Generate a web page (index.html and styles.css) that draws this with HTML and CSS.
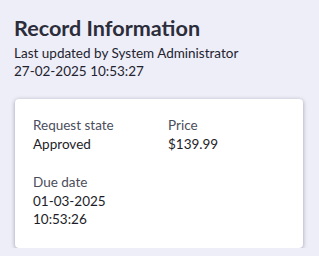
FILE: index.html
```html
<!DOCTYPE html>
<html>
<head>
  <link rel="stylesheet" href="styles.css">
</head>
<body>
  <div class="header">
    <h1>Record Information</h1>
    <p class="updated">Last updated by System Administrator<br>27-02-2025 10:53:27</p>
  </div>

  <div class="card">
    <div class="field">
      <div class="label">Request state</div>
      <div class="value">Approved</div>
    </div>
    <div class="field">
      <div class="label">Price</div>
      <div class="value">$139.99</div>
    </div>
    <div class="field">
      <div class="label">Due date</div>
      <div class="value">01-03-2025 10:53:26</div>
    </div>
  </div>
</body>
</html>
```
FILE: styles.css
```css
body {
  margin: 0;
  padding: 15px 16px 0 14px;
  background-color: #eeeef8;
  font-family: Lato, "Open Sans", sans-serif;
  color: #1f2030;
}
h1 {
  margin: 0;
  font-size: 21.6px;
  line-height: 26px;
  font-weight: 700;
  color: #2b2d3b;
}
.updated {
  margin: 3px 0 0;
  font-size: 13.5px;
  line-height: 18px;
  color: #22232f;
}
.card {
  margin: 19px 0 0 1px;
  width: 288px;
  box-sizing: border-box;
  padding: 16px 18px 20px;
  background-color: #fff;
  border-radius: 4px;
  box-shadow: 0 1px 4px rgba(40, 40, 70, 0.4);
  display: grid;
  grid-template-columns: repeat(2, 1fr);
  column-gap: 18px;
  row-gap: 19px;
}
.label {
  font-size: 13.5px;
  line-height: 20px;
  color: #4b4d5c;
}
.value {
  font-size: 13.5px;
  line-height: 18px;
  color: #1c1d28;
}
```
